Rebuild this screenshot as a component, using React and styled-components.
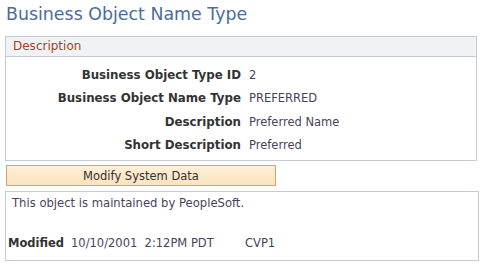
import React from "react";
import styled, { createGlobalStyle } from "styled-components";

const GlobalStyle = createGlobalStyle`
  body {
    margin: 0;
    background: #fff;
    font-family: "DejaVu Sans", Verdana, sans-serif;
  }
`;

const rows = [
  { label: "Business Object Type ID", value: "2" },
  { label: "Business Object Name Type", value: "PREFERRED" },
  { label: "Description", value: "Preferred Name" },
  { label: "Short Description", value: "Preferred" },
];

const App = () => (
  <Page>
    <GlobalStyle />
    <Title>Business Object Name Type</Title>
    <Group>
      <GroupHeader>Description</GroupHeader>
      <Fields>
        {rows.map((r) => (
          <React.Fragment key={r.label}>
            <Label>{r.label}</Label>
            <Value>{r.value}</Value>
          </React.Fragment>
        ))}
      </Fields>
    </Group>
    <ModifyButton type="button">Modify System Data</ModifyButton>
    <InfoBox>
      <Note>This object is maintained by PeopleSoft.</Note>
      <ModifiedRow>
        <ModLabel>Modified</ModLabel>
        <ModValue>10/10/2001&nbsp; 2:12PM PDT</ModValue>
        <ModUser>CVP1</ModUser>
      </ModifiedRow>
    </InfoBox>
  </Page>
);

const Page = styled.div`
  width: 484px;
  height: 265px;
  padding: 0 5px;
  box-sizing: border-box;
  display: flex;
  flex-direction: column;
`;

const Title = styled.h1`
  margin: 4px 0 0 1px;
  height: 32px;
  font-size: 17.4px;
  font-weight: normal;
  color: #4b6d9c;
  line-height: 20px;
`;

const Group = styled.section`
  width: 472px;
  box-sizing: border-box;
  border: 1px solid #c6cbd1;
  height: 125px;
`;

const GroupHeader = styled.div`
  height: 19px;
  line-height: 19px;
  padding-left: 7px;
  background: #f0f3f5;
  border-bottom: 1px solid #c6cbd1;
  color: #b03b20;
  font-size: 12px;
`;

const Fields = styled.div`
  display: grid;
  grid-template-columns: 235px auto;
  column-gap: 8px;
  padding-top: 8px;
`;

const Label = styled.div`
  text-align: right;
  font-weight: bold;
  font-size: 11.8px;
  color: #333;
  height: 23.3px;
  line-height: 20px;
`;

const Value = styled.div`
  font-size: 11.5px;
  color: #4a3f5c;
  height: 23.3px;
  line-height: 20px;
`;

const ModifyButton = styled.button`
  margin: 4px 0 0 1px;
  width: 270px;
  height: 21px;
  padding: 0;
  border: 1px solid #d6a273;
  background: linear-gradient(#fdefd8, #fbe3bc);
  font-family: inherit;
  font-size: 11.5px;
  color: #333;
`;

const InfoBox = styled.div`
  margin-top: 5px;
  width: 474px;
  height: 70px;
  box-sizing: border-box;
  border: 1px solid #c6cbd1;
  padding: 4px 2px 0;
`;

const Note = styled.div`
  font-size: 11.6px;
  color: #4a3f5c;
  padding-left: 4px;
  height: 40px;
`;

const ModifiedRow = styled.div`
  display: flex;
  align-items: baseline;
  font-size: 11.5px;
`;

const ModLabel = styled.span`
  font-weight: bold;
  color: #333;
  width: 63px;
`;

const ModValue = styled.span`
  color: #4a3f5c;
  width: 174px;
`;

const ModUser = styled.span`
  color: #4a3f5c;
`;

export default App;
